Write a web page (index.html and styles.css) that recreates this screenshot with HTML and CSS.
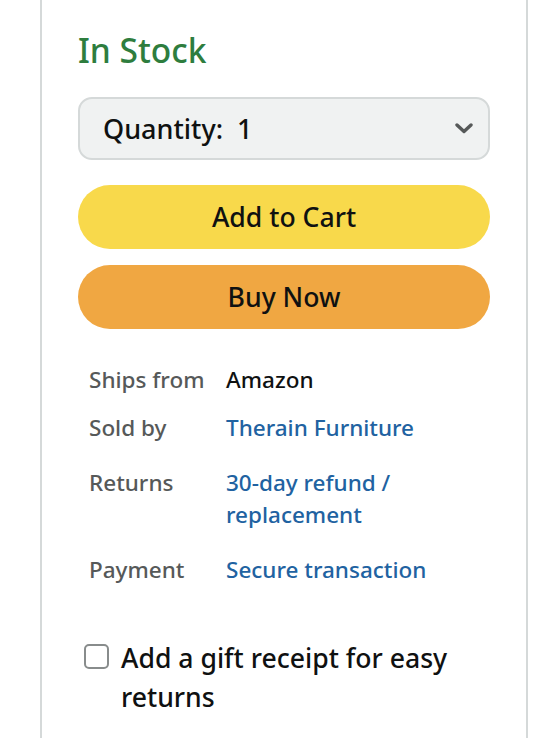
FILE: index.html
```html
<!DOCTYPE html>
<html lang="en">
<head>
<meta charset="utf-8">
<title>Buy box</title>
<link rel="stylesheet" href="styles.css">
</head>
<body>
<div class="buybox">
  <div class="stock">In Stock</div>
  <div class="qty">
    <span class="qty-label">Quantity:&nbsp; 1</span>
    <svg class="chev" width="18" height="11" viewBox="0 0 18 11" aria-hidden="true"><path d="M2 2 L9 8.5 L16 2" fill="none" stroke="#565959" stroke-width="3.4" stroke-linecap="round" stroke-linejoin="round"/></svg>
  </div>
  <button class="btn btn-cart">Add to Cart</button>
  <button class="btn btn-buy">Buy Now</button>
  <div class="details">
    <div class="row row-ships"><span class="lbl">Ships from</span><span class="val">Amazon</span></div>
    <div class="row row-sold"><span class="lbl">Sold by</span><a class="val link">Therain Furniture</a></div>
    <div class="row row-ret"><span class="lbl">Returns</span><a class="val link">30-day refund / replacement</a></div>
    <div class="row row-pay"><span class="lbl">Payment</span><a class="val link">Secure transaction</a></div>
  </div>
  <label class="gift"><span class="cb"></span><span class="gift-text">Add a gift receipt for easy returns</span></label>
</div>
</body>
</html>
```
FILE: styles.css
```css
html, body { margin: 0; padding: 0; background: #ffffff; }
body { font-family: "Noto Sans", "Open Sans", sans-serif; font-weight: 500; color: #0f1111; }

.buybox {
  box-sizing: border-box;
  width: 488px;
  min-height: 738px;
  margin-left: 40px;
  padding: 30px 36px 0;
  border-left: 2px solid #d5d9d9;
  border-right: 2px solid #d5d9d9;
}

.stock {
  font-size: 33.5px;
  line-height: 40px;
  color: #2e7d3e;
}

.qty {
  box-sizing: border-box;
  margin-top: 27px;
  height: 63px;
  display: flex;
  align-items: center;
  justify-content: space-between;
  padding: 0 15px 0 23px;
  background: #f0f2f2;
  border: 2px solid #d5d9d9;
  border-radius: 14px;
}
.qty-label { font-size: 27px; line-height: 38px; color: #0f1111; }
.chev { display: block; }

.btn {
  display: block;
  width: 100%;
  height: 64px;
  border: none;
  border-radius: 32px;
  font-family: "Noto Sans", "Open Sans", sans-serif;
  font-weight: 500;
  font-size: 26.6px;
  color: #0f1111;
  padding: 0;
}
.btn-cart { margin-top: 25px; background: #f8d94b; }
.btn-buy { margin-top: 16px; background: #f0a742; }

.details { margin-top: 34.5px; padding-left: 11px; }
.row {
  display: grid;
  grid-template-columns: 137px 1fr;
  font-size: 22.5px;
  line-height: 32px;
}
.row-sold { margin-top: 16px; }
.row-ret, .row-pay { margin-top: 23px; }
.lbl { color: #565959; }
.val { color: #0f1111; }
.link { color: #2162a1; text-decoration: none; }

.gift {
  display: flex;
  align-items: flex-start;
  gap: 12px;
  margin-top: 53px;
  font-size: 26.6px;
  line-height: 39px;
  color: #0f1111;
}
.cb {
  flex: none;
  box-sizing: border-box;
  width: 25px;
  height: 25px;
  margin: 5px 0 0 6px;
  border: 2px solid #888c8c;
  border-radius: 5px;
  background: #ffffff;
}
```
